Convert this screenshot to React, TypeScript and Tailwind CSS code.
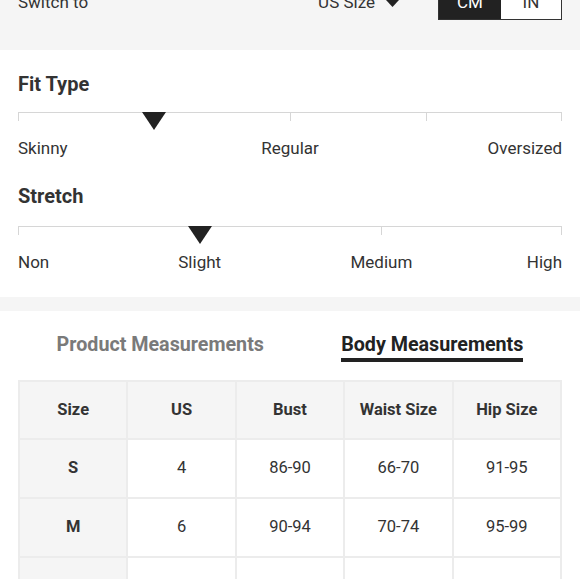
import React from "react"

const FIT = {
  ticks: [0, 50, 75, 100],
  marker: 25,
  labels: [
    { text: "Skinny", at: 0 },
    { text: "Regular", at: 50 },
    { text: "Oversized", at: 100 },
  ],
}

const STRETCH = {
  ticks: [0, 66.8, 100],
  marker: 33.4,
  labels: [
    { text: "Non", at: 0 },
    { text: "Slight", at: 33.4 },
    { text: "Medium", at: 66.8 },
    { text: "High", at: 100 },
  ],
}

const HEAD = ["Size", "US", "Bust", "Waist Size", "Hip Size"]
const ROWS = [
  ["S", "4", "86-90", "66-70", "91-95"],
  ["M", "6", "90-94", "70-74", "95-99"],
  ["L", "8", "94-98", "74-78", "99-103"],
]

function Scale({ ticks, marker, labels }: { ticks: number[]; marker: number; labels: { text: string; at: number }[] }) {
  return (
    <div>
      <div className="relative h-[26px]">
        <div className="h-px bg-[#d6d6d6]" />
        {ticks.map((t) => (
          <span
            key={t}
            className="absolute top-0 w-px h-[9px] bg-[#d6d6d6]"
            style={{ left: t === 100 ? "calc(100% - 1px)" : `${t}%` }}
          />
        ))}
        <svg
          className="absolute top-0 -translate-x-1/2"
          style={{ left: `${marker}%` }}
          width="24"
          height="18"
          viewBox="0 0 24 18"
        >
          <path d="M0 0H24L12 18Z" fill="#222" />
        </svg>
      </div>
      <div className="relative h-[20px] text-[17px] leading-[20px] text-[#333]">
        {labels.map(({ text, at }) => (
          <span
            key={text}
            className="absolute top-0 whitespace-nowrap"
            style={
              at === 0
                ? { left: 0 }
                : at === 100
                ? { right: 0 }
                : { left: `${at}%`, transform: "translateX(-50%)" }
            }
          >
            {text}
          </span>
        ))}
      </div>
    </div>
  )
}

export default function App() {
  return (
    <div className="w-[580px] h-[579px] overflow-hidden bg-white font-['Roboto',sans-serif] text-[#222]">
      {/* barre switch */}
      <div className="h-[50px] bg-[#f5f5f5] overflow-hidden">
        <div className="-mt-[14px] h-[34px] flex items-center pl-[18px] pr-[18px] text-[17px] text-[#333]">
          <span>Switch to</span>
          <div className="ml-auto flex items-center gap-[11px]">
            <span>US Size</span>
            <svg width="13" height="7" viewBox="0 0 13 7">
              <path d="M0 0H13L6.5 7Z" fill="#222" />
            </svg>
          </div>
          <div className="ml-[39px] flex h-[34px] border border-[#333]">
            <span className="w-[62px] flex items-center justify-center bg-[#222] text-white">CM</span>
            <span className="w-[60px] flex items-center justify-center bg-white text-[#333]">IN</span>
          </div>
        </div>
      </div>

      {/* fit + stretch */}
      <div className="px-[18px] pt-[22px] pb-[25px]">
        <h3 className="text-[20px] leading-[24px] font-bold text-[#333]">Fit Type</h3>
        <div className="mt-[16px]">
          <Scale {...FIT} />
        </div>
        <h3 className="mt-[26px] text-[20px] leading-[24px] font-bold text-[#333]">Stretch</h3>
        <div className="mt-[18px]">
          <Scale {...STRETCH} />
        </div>
      </div>

      <div className="h-[14px] bg-[#f5f5f5]" />

      {/* onglets */}
      <div className="px-[18px] pt-[22px] flex justify-around">
        <span className="pb-px border-b-4 border-transparent text-[19.7px] leading-[24px] font-bold text-[#7a7a7a]">
          Product Measurements
        </span>
        <span className="pb-px border-b-4 border-[#222] text-[19.7px] leading-[24px] font-bold text-[#222]">
          Body Measurements
        </span>
      </div>

      <div className="px-[18px] mt-[18px]">
        <table className="w-full table-fixed border-collapse text-[16.5px] text-[#333]">
          <thead>
            <tr>
              {HEAD.map((h) => (
                <th key={h} className="h-[58px] border-2 border-[#ececec] bg-[#f5f5f5] font-bold text-center">
                  {h}
                </th>
              ))}
            </tr>
          </thead>
          <tbody>
            {ROWS.map((r) => (
              <tr key={r[0]}>
                {r.map((c, i) => (
                  <td
                    key={i}
                    className={
                      i === 0
                        ? "h-[59px] border-2 border-[#ececec] bg-[#f5f5f5] font-bold text-center"
                        : "h-[59px] border-2 border-[#ececec] text-center"
                    }
                  >
                    {c}
                  </td>
                ))}
              </tr>
            ))}
          </tbody>
        </table>
      </div>
    </div>
  )
}
